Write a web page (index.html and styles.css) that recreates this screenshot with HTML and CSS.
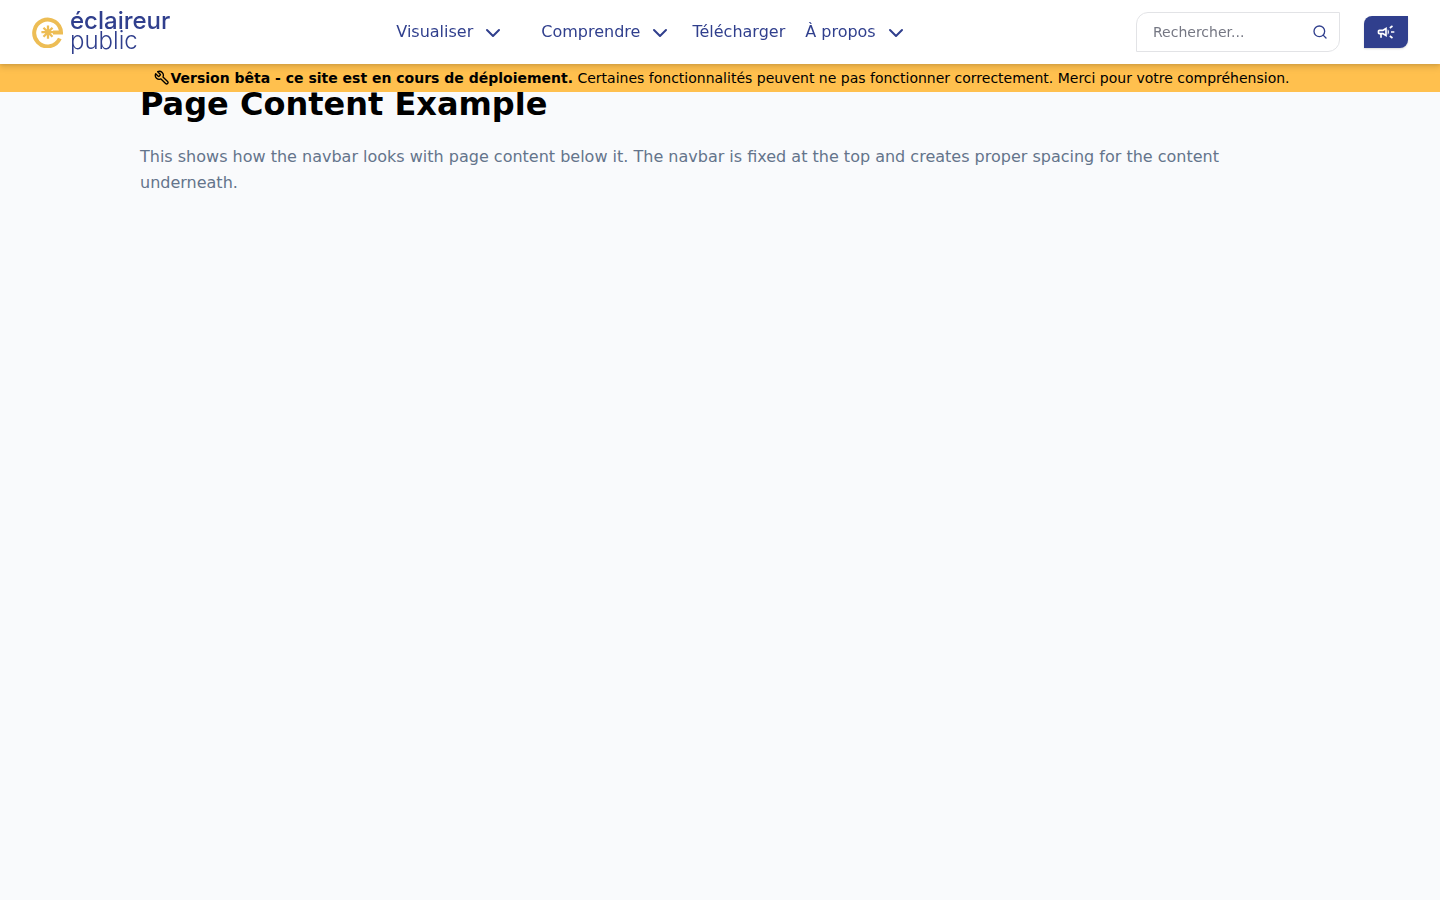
FILE: index.html
```html
<!DOCTYPE html>
<html lang="fr">
<head>
<meta charset="utf-8">
<meta name="viewport" content="width=device-width, initial-scale=1">
<title>Éclaireur Public</title>
<link rel="stylesheet" href="styles.css">
</head>
<body>
<header class="site-header">
  <nav class="navbar">
    <a class="logo" href="#">
      <svg class="logo-mark" viewBox="0 0 32 32" aria-hidden="true">
        <path d="M27.8 22.5A13.4 13.4 0 1 1 29 16.6H21" fill="none" stroke="#edbd55" stroke-width="4"/>
        <path d="M16 9.6v13.2M9.4 16.2h13.2M11.5 11.7l9 9M20.5 11.7l-9 9" fill="none" stroke="#edbd55" stroke-width="2.3"/>
      </svg>
      <span class="logo-text"><span class="logo-top">éclaireur</span><span class="logo-bottom">public</span></span>
    </a>
    <div class="menu">
      <button class="menu-item menu-first" type="button">Visualiser <svg class="chevron" viewBox="0 0 24 24" aria-hidden="true"><path d="m6 9 6 6 6-6"/></svg></button>
      <button class="menu-item" type="button">Comprendre <svg class="chevron" viewBox="0 0 24 24" aria-hidden="true"><path d="m6 9 6 6 6-6"/></svg></button>
      <a class="menu-item" href="#">Télécharger</a>
      <button class="menu-item" type="button">À propos <svg class="chevron" viewBox="0 0 24 24" aria-hidden="true"><path d="m6 9 6 6 6-6"/></svg></button>
    </div>
    <div class="actions">
      <form class="search">
        <input class="search-input" type="search" placeholder="Rechercher..." aria-label="Rechercher">
        <button class="search-button" type="submit" aria-label="Lancer la recherche">
          <svg class="search-icon" viewBox="0 0 24 24" aria-hidden="true"><circle cx="11" cy="11" r="8"/><path d="m21 21-4.3-4.3"/></svg>
        </button>
      </form>
      <button class="campaign" type="button" aria-label="Interpeller">
        <svg class="campaign-icon" viewBox="0 0 24 24" aria-hidden="true"><path d="M18 11v2h4v-2h-4zM16 17.61c.96.71 2.21 1.65 3.2 2.39.4-.53.8-1.07 1.2-1.6-.99-.74-2.24-1.68-3.2-2.4-.4.54-.8 1.08-1.2 1.61zM20.4 5.6c-.4-.53-.8-1.07-1.2-1.6-.99.74-2.24 1.68-3.2 2.4.4.53.8 1.07 1.2 1.6.96-.72 2.21-1.65 3.2-2.4zM4 9c-1.1 0-2 .9-2 2v2c0 1.1.9 2 2 2h1v4h2v-4h1l5 3V6L8 9H4zm5.03 1.71L11 9.53v4.94l-1.97-1.18-.48-.29H4v-2h4.55l.48-.29zM15.5 12c0-1.33-.58-2.53-1.5-3.35v6.69c.92-.81 1.5-2.01 1.5-3.34z"/></svg>
      </button>
    </div>
  </nav>
  <div class="banner">
    <svg class="wrench" viewBox="0 0 24 24" aria-hidden="true"><path d="M14.7 6.3a1 1 0 0 0 0 1.4l1.6 1.6a1 1 0 0 0 1.4 0l3.77-3.77a6 6 0 0 1-7.94 7.94l-6.91 6.91a2.12 2.12 0 0 1-3-3l6.91-6.91a6 6 0 0 1 7.94-7.94l-3.76 3.76z" transform="matrix(-1 0 0 1 24 0)"/></svg>
    <p class="banner-text"><strong>Version bêta - ce site est en cours de déploiement.</strong> Certaines fonctionnalités peuvent ne pas fonctionner correctement. Merci pour votre compréhension.</p>
  </div>
</header>
<main class="content">
  <h1 class="title">Page Content Example</h1>
  <p class="intro">This shows how the navbar looks with page content below it. The navbar is fixed at the top and creates proper spacing for the content underneath.</p>
</main>
</body>
</html>
```
FILE: styles.css
```css
* { box-sizing: border-box; }
body {
  margin: 0;
  min-height: 100vh;
  background: #f9fafc;
  color: #000;
  font: 16px/24px "DejaVu Sans", sans-serif;
}
button, input { font: inherit; color: inherit; }
button { padding: 0; border: 0; background: none; cursor: pointer; }
a { color: inherit; text-decoration: none; }
svg { display: block; flex: none; }

.site-header { position: fixed; top: 0; left: 0; right: 0; z-index: 10; }
.navbar {
  position: relative;
  z-index: 1;
  display: grid;
  grid-template-columns: 1fr auto 1fr;
  align-items: center;
  height: 64px;
  padding: 0 32px;
  background: #fff;
  color: #303f8d;
  box-shadow: 0 1px 3px rgba(0, 0, 0, .1), 0 4px 6px rgba(0, 0, 0, .1);
}

.logo { display: flex; align-items: center; gap: 6px; }
.logo-mark { width: 32px; height: 32px; }
.logo-text { display: flex; flex-direction: column; font-family: Inter, sans-serif; font-size: 24px; line-height: 20px; padding-bottom: 2px; }
.logo-top { font-weight: 500; }
.logo-bottom { font-weight: 300; }

.menu { display: flex; align-items: center; gap: 20px; margin-right: 136px; }
.menu-item { display: flex; align-items: center; gap: 8px; white-space: nowrap; }
.menu-first { margin-right: 16px; }
.chevron { width: 24px; height: 24px; margin-top: 2px; }
.chevron, .search-icon, .wrench {
  fill: none;
  stroke: currentColor;
  stroke-width: 2;
  stroke-linecap: round;
  stroke-linejoin: round;
}

.actions { display: flex; align-items: center; justify-content: flex-end; gap: 24px; }
.search {
  display: flex;
  align-items: center;
  width: 204px;
  height: 40px;
  padding: 0 11px 0 16px;
  border: 1px solid #e2e3e6;
  border-radius: 12px 0;
  background: #fff;
}
.search-input {
  flex: 1;
  min-width: 0;
  padding: 0;
  border: 0;
  outline: 0;
  background: none;
  font-size: 14px;
  line-height: 20px;
}
.search-input::placeholder { color: #757783; opacity: 1; }
.search-icon { width: 16px; height: 16px; }
.campaign {
  display: flex;
  align-items: center;
  justify-content: center;
  width: 44px;
  height: 32px;
  border-radius: 8px 0;
  background: #303f8d;
  color: #fff;
  box-shadow: 0 1px 2px rgba(0, 0, 0, .15);
}
.campaign-icon { width: 20px; height: 20px; fill: currentColor; }

.banner {
  display: flex;
  align-items: center;
  justify-content: center;
  padding: 4px 16px 4px 20px;
  background: #ffc04e;
  font-size: 14px;
  line-height: 20px;
}
.banner-text { margin: 0; }
.wrench { width: 16px; height: 16px; }

.content { max-width: 1200px; margin: 0 auto; padding: 84px 20px 20px; }
.title { margin: 0 0 20px; font-size: 32px; line-height: 40px; }
.intro { margin: 0; color: #64748b; line-height: 26px; }
```
